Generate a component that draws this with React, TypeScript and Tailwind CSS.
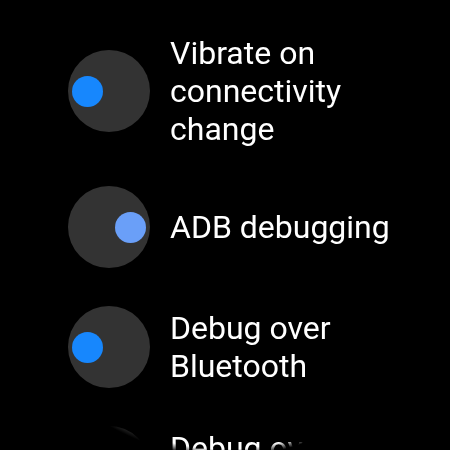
const items = [
  { label: "Vibrate on connectivity change", on: false },
  { label: "ADB debugging", on: true },
  { label: "Debug over Bluetooth", on: false },
  { label: "Debug over Wi-Fi", on: false },
];

function Toggle({ on }: { on: boolean }) {
  return (
    <div
      className={`w-[82px] h-[82px] shrink-0 rounded-full bg-[#333333] flex items-center px-[4px] ${
        on ? "justify-end" : "justify-start"
      }`}
    >
      <div className={`w-[31px] h-[31px] rounded-full ${on ? "bg-[#6a9ff8]" : "bg-[#1787fd]"}`} />
    </div>
  );
}

export default function App() {
  return (
    <div className="w-[450px] h-[450px] bg-black overflow-hidden">
      {/* round watch face: fade out past the circle */}
      <div className="w-full h-full overflow-hidden [mask-image:radial-gradient(circle_at_center,black_224px,transparent_232px)]">
        <div className="flex flex-col gap-[38px] pt-[34px] pl-[68px]">
          {items.map((it) => (
            <div key={it.label} className="flex items-center gap-[20px] min-h-[82px]">
              <Toggle on={it.on} />
              <span className="max-w-[225px] text-white text-[32px] leading-[38px] font-['Roboto',sans-serif]">
                {it.label}
              </span>
            </div>
          ))}
        </div>
      </div>
    </div>
  );
}
